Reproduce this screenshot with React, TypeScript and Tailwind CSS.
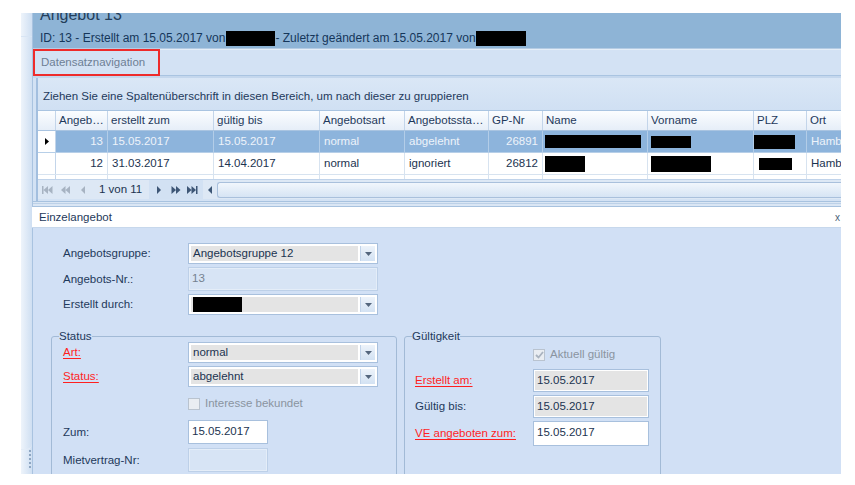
import React from "react";

const cols = [
  { key: "nr", title: "Angeb…", w: 52, right: true },
  { key: "erstellt", title: "erstellt zum", w: 106 },
  { key: "gueltig", title: "gültig bis", w: 106 },
  { key: "art", title: "Angebotsart", w: 85 },
  { key: "status", title: "Angebotssta…", w: 84 },
  { key: "gp", title: "GP-Nr", w: 54, right: true },
  { key: "name", title: "Name", w: 105 },
  { key: "vorname", title: "Vorname", w: 106 },
  { key: "plz", title: "PLZ", w: 53 },
  { key: "ort", title: "Ort", w: 60 },
];

type Row = {
  nr: string;
  erstellt: string;
  gueltig: string;
  art: string;
  status: string;
  gp: string;
  name: [number, number, number];
  vorname: [number, number, number];
  plz: [number, number, number];
  ort: string;
};

// black boxes are redactions: [offset-x, width, height]
const rows: Row[] = [
  {
    nr: "13",
    erstellt: "15.05.2017",
    gueltig: "15.05.2017",
    art: "normal",
    status: "abgelehnt",
    gp: "26891",
    name: [2, 96, 13],
    vorname: [3, 40, 12],
    plz: [0, 41, 14],
    ort: "Hamburg",
  },
  {
    nr: "12",
    erstellt: "31.03.2017",
    gueltig: "14.04.2017",
    art: "normal",
    status: "ignoriert",
    gp: "26812",
    name: [2, 40, 16],
    vorname: [3, 60, 16],
    plz: [5, 33, 12],
    ort: "Hamburg",
  },
];

function Redact({ box }: { box: [number, number, number] }) {
  return <span className="block bg-black" style={{ marginLeft: box[0], width: box[1], height: box[2] }} />;
}

function Arrow({ d, dark }: { d: string; dark?: boolean }) {
  return (
    <svg width="12" height="8" viewBox="0 0 12 8" className={dark ? "fill-[#3d5676]" : "fill-[#a7b3c2]"}>
      <path d={d} />
    </svg>
  );
}

function DropBtn() {
  return (
    <div className="ml-[2px] flex w-[15px] items-center justify-center border-l border-[#c2d4ea] bg-gradient-to-b from-[#edf3fa] to-[#d3e2f3]">
      <svg width="7" height="4" viewBox="0 0 7 4" className="fill-[#54667d]">
        <path d="M0 0h7L3.5 4z" />
      </svg>
    </div>
  );
}

function Select({ children, w = 190 }: { children?: React.ReactNode; w?: number }) {
  return (
    <div className="flex h-[21px] border border-[#a8c0dd] bg-white p-[2px]" style={{ width: w }}>
      <div className="flex flex-1 items-center overflow-hidden bg-[#e4e4e4] px-[2px] text-[#1b3350]">{children}</div>
      <DropBtn />
    </div>
  );
}

function Field({
  children,
  w,
  h = 24,
  tone = "white",
}: {
  children?: React.ReactNode;
  w: number;
  h?: number;
  tone?: "white" | "gray" | "off";
}) {
  const inner =
    tone === "white"
      ? "bg-white text-[#1b3350]"
      : tone === "gray"
      ? "bg-[#e4e4e4] text-[#1b3350]"
      : "bg-[#d7e4f5] text-[#75818f]";
  const outer = tone === "off" ? "border-[#bdd0e8] bg-[#e4edf8]" : "border-[#a8c0dd] bg-white";
  return (
    <div className={`flex border p-[1px] ${outer}`} style={{ width: w, height: h }}>
      <div className={`flex flex-1 items-start pt-[3px] pl-[2px] ${inner}`}>{children}</div>
    </div>
  );
}

function Check({ checked, label }: { checked?: boolean; label: string }) {
  return (
    <div className="flex items-center gap-[5px] text-[#8a94a0]">
      <span className="flex h-[12px] w-[12px] items-center justify-center border border-[#b9c3cf] bg-[#e9edf2]">
        {checked && (
          <svg width="9" height="8" viewBox="0 0 9 8" className="stroke-[#a9b3bf]" fill="none" strokeWidth="1.8">
            <path d="M1 4l2.5 2.5L8 1" />
          </svg>
        )}
      </span>
      <span>{label}</span>
    </div>
  );
}

function Label({ children, red }: { children: React.ReactNode; red?: boolean }) {
  return red ? (
    <span className="text-[#ff1f1f] underline decoration-[#ff1f1f] underline-offset-2">{children}</span>
  ) : (
    <span className="text-[#1e395b]">{children}</span>
  );
}

export default function App() {
  return (
    <div className="h-[485px] w-[855px] overflow-hidden bg-white pt-[13px] pl-[21px] font-['Liberation_Sans',Arial,sans-serif] text-[11.5px] leading-[13px] text-[#1e395b]">
      <div className="flex h-[461px] w-[820px] overflow-hidden">
        {/* collapsed side pane */}
        <div className="flex w-[12px] flex-col border-r border-[#a9c3e0] bg-gradient-to-r from-[#eef4fb] to-[#cfdff2]">
          <div className="h-[24px] border-b border-[#d8e5f4]" />
          <div className="flex-1 rounded-r-[6px] border-b border-[#e3ecf7]" />
          <div className="mb-[6px] ml-[8px] flex flex-col gap-[2px]">
            {[0, 1, 2, 3, 4].map((i) => (
              <span key={i} className="h-[2px] w-[2px] bg-[#8ea6c2]" />
            ))}
          </div>
        </div>

        <div className="flex min-w-0 flex-1 flex-col">
          {/* title */}
          <div className="h-[35px] overflow-hidden bg-[#8eb4d6] pl-[7px]">
            <div className="-mt-[8px] text-[16px] leading-[20px] text-[#243f5b]">Angebot 13</div>
            <div className="mt-[6px] flex items-center whitespace-nowrap text-[12px] text-[#15365a]">
              <span>ID: 13 - Erstellt am 15.05.2017 von</span>
              <span className="ml-[1px] inline-block h-[15px] w-[49px] bg-black" />
              <span>- Zuletzt geändert am 15.05.2017 von</span>
              <span className="inline-block h-[15px] w-[50px] bg-black" />
            </div>
          </div>
          <div className="h-[2px] border-t border-[#b5cce4] bg-[#e5eef8]" />

          {/* record navigation */}
          <div className="h-[26px] border-b border-[#a9c4e1] bg-[#d3e2f4]">
            <div className="flex h-[27px] w-[127px] -mt-[1px] items-center border-2 border-[#ee2b2b] pl-[6px] text-[#6e7f94]">
              Datensatznavigation
            </div>
          </div>
          <div className="h-[2px] bg-[#c4d7ed]" />

          {/* grid */}
          <div className="flex h-[123px] flex-col bg-[#d3e2f4] pl-[3px]">
            <div className="flex flex-1 flex-col border-l-2 border-[#a3bfdf]">
              <div className="flex h-[32px] items-center bg-gradient-to-b from-[#dae7f6] to-[#d0e0f3] pl-[5px] pt-[4px]">
                Ziehen Sie eine Spaltenüberschrift in diesen Bereich, um nach dieser zu gruppieren
              </div>
              <div className="flex h-[21px] border-t border-b border-[#a9c4e1] bg-gradient-to-b from-[#fbfdff] to-[#e6eef8]">
                <div className="w-[18px] shrink-0 border-r border-[#c3d5ea]" />
                {cols.map((c) => (
                  <div
                    key={c.key}
                    className="flex shrink-0 items-center overflow-hidden whitespace-nowrap border-r border-[#c3d5ea] pl-[3px]"
                    style={{ width: c.w }}
                  >
                    {c.title}
                  </div>
                ))}
              </div>
              {rows.map((r, i) => {
                const sel = i === 0;
                return (
                  <div
                    key={r.nr}
                    className={`flex h-[22px] border-b ${
                      sel ? "border-[#b7cfe8] bg-[#8db4dc] text-[#edf3fa]" : "border-[#d7e3f0] bg-white text-[#1b3350]"
                    }`}
                  >
                    <div className="flex w-[18px] shrink-0 items-center justify-center border-r border-[#c3d5ea] bg-white">
                      {sel && (
                        <svg width="4" height="7" viewBox="0 0 4 7" className="fill-black">
                          <path d="M0 0l4 3.5L0 7z" />
                        </svg>
                      )}
                    </div>
                    {cols.map((c) => {
                      const v = r[c.key as keyof Row];
                      return (
                        <div
                          key={c.key}
                          className={`flex shrink-0 items-center overflow-hidden whitespace-nowrap border-r ${
                            sel ? "border-[#b3cde8]" : "border-[#d7e3f0]"
                          } ${c.right ? "justify-end pr-[4px]" : "pl-[4px]"}`}
                          style={{ width: c.w, paddingLeft: Array.isArray(v) ? 0 : undefined }}
                        >
                          {Array.isArray(v) ? <Redact box={v} /> : v}
                        </div>
                      );
                    })}
                  </div>
                );
              })}
              <div className="flex h-[4px] bg-white">
                <div className="w-[18px] shrink-0 border-r border-[#c3d5ea]" />
                {cols.map((c) => (
                  <div key={c.key} className="shrink-0 border-r border-[#d7e3f0]" style={{ width: c.w }} />
                ))}
              </div>
              {/* navigator + scrollbar */}
              <div className="flex h-[20px] items-center border-t border-[#c0d3ea] bg-[#dde8f5]">
                <div className="flex items-center gap-[6px] pl-[4px]">
                  <Arrow d="M0 0h1.5v8H0zM1.5 4L6 0v8zM6 4l4.5-4v8z" />
                  <Arrow d="M1 4L5.5 0v8zM5.5 4L10 0v8z" />
                  <Arrow d="M3 4L7 0v8z" />
                </div>
                <span className="ml-[9px] text-[#1b3350]">1 von 11</span>
                <div className="ml-[7px] flex h-full items-center gap-[5px] bg-[#d2e1f3] px-[4px]">
                  <Arrow dark d="M4 0l4 4-4 4z" />
                  <Arrow dark d="M1.5 0L6 4l-4.5 4zM6 0l4.5 4L6 8z" />
                  <Arrow dark d="M0 0l4.5 4L0 8zM4.5 0L9 4l-4.5 4zM9 0h1.5v8H9z" />
                </div>
                <div className="flex w-[14px] justify-center">
                  <svg width="4" height="8" viewBox="0 0 4 8" className="fill-[#3d5676]">
                    <path d="M4 0v8L0 4z" />
                  </svg>
                </div>
                <div className="h-[16px] flex-1 rounded-l-[3px] border border-r-0 border-[#a9c0dc] bg-gradient-to-b from-[#f1f6fc] to-[#d6e4f4]" />
              </div>
            </div>
          </div>
          <div className="flex h-[6px] flex-col justify-between border-t border-b border-[#a7c2df] bg-[#dae6f4]">
            <span className="mt-[1px] h-px bg-[#bcd1e8]" />
          </div>

          {/* detail tab */}
          <div className="-ml-[1px] flex h-[21px] items-center justify-between border-b border-[#c7d8ec] bg-white pl-[4px] pr-[1px]">
            <span className="ml-[3px]">Einzelangebot</span>
            <span className="text-[10px] text-[#4a5f78]">x</span>
          </div>

          <div className="-ml-[1px] flex-1 overflow-hidden border-l border-[#a9c3e0] bg-[#d1e0f5] pl-[18px]">
            <div className="mt-[15px] grid grid-cols-[125px_auto] items-center gap-y-[3px] pl-[12px]">
              <Label>Angebotsgruppe:</Label>
              <Select>Angebotsgruppe 12</Select>
              <Label>Angebots-Nr.:</Label>
              <Field w={190} tone="off">13</Field>
              <Label>Erstellt durch:</Label>
              <Select>
                <span className="block h-[15px] w-[49px] bg-black" />
              </Select>
            </div>

            <div className="mt-[15px] flex gap-[7px]">
              <fieldset className="h-[160px] w-[346px] rounded-[3px] border border-[#a2bad6]">
                <legend className="ml-[7px] leading-[12px]">Status</legend>
                <div className="grid grid-cols-[125px_auto] items-center gap-y-[3px] pl-[11px]">
                  <Label red>Art:</Label>
                  <Select>normal</Select>
                  <Label red>Status:</Label>
                  <Select>abgelehnt</Select>
                  <span />
                  <div className="py-[7px]">
                    <Check label="Interesse bekundet" />
                  </div>
                  <Label>Zum:</Label>
                  <Field w={80}>15.05.2017</Field>
                  <span className="mt-[1px]">Mietvertrag-Nr:</span>
                  <div className="mt-[1px]">
                    <Field w={80} tone="off" />
                  </div>
                </div>
              </fieldset>

              <fieldset className="h-[160px] w-[257px] rounded-[3px] border border-[#a2bad6]">
                <legend className="ml-[7px] leading-[12px]">Gültigkeit</legend>
                <div className="mt-[6px] grid grid-cols-[118px_auto] items-center gap-y-[3px] pl-[10px]">
                  <span />
                  <Check checked label="Aktuell gültig" />
                  <span />
                  <span className="h-[2px]" />
                  <Label red>Erstellt am:</Label>
                  <Field w={116} h={23} tone="gray">15.05.2017</Field>
                  <Label>Gültig bis:</Label>
                  <Field w={116} h={23} tone="gray">15.05.2017</Field>
                  <Label red>VE angeboten zum:</Label>
                  <Field w={116} h={25}>15.05.2017</Field>
                </div>
              </fieldset>
            </div>
          </div>
        </div>
      </div>
    </div>
  );
}
